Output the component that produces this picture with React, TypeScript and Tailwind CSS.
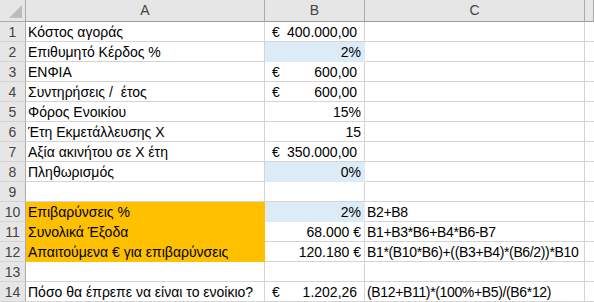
import React from "react";

type Cell = {
  a?: string;
  b?: string;
  euro?: boolean;
  c?: string;
  blue?: boolean;
  orange?: boolean;
};

const rows: Cell[] = [
  { a: "Κόστος αγοράς", euro: true, b: "400.000,00 " },
  { a: "Επιθυμητό Κέρδος %", b: "2%", blue: true },
  { a: "ΕΝΦΙΑ", euro: true, b: "600,00 " },
  { a: "Συντηρήσεις /  έτος", euro: true, b: "600,00 " },
  { a: "Φόρος Ενοικίου", b: "15%" },
  { a: "Έτη Εκμετάλλευσης Χ", b: "15" },
  { a: "Αξία ακινήτου σε Χ έτη", euro: true, b: "350.000,00 " },
  { a: "Πληθωρισμός", b: "0%", blue: true },
  {},
  { a: "Επιβαρύνσεις %", b: "2%", blue: true, orange: true, c: "B2+B8" },
  { a: "Συνολικά Έξοδα", b: "68.000 €", orange: true, c: "B1+B3*B6+B4*B6-B7" },
  {
    a: "Απαιτούμενα € για επιβαρύνσεις",
    b: "120.180 €",
    orange: true,
    c: "B1*(B10*B6)+((B3+B4)*(B6/2))*B10",
  },
  {},
  { a: "Πόσο θα έπρεπε να είναι το ενοίκιο?", euro: true, b: "1.202,26 ", c: "(B12+B11)*(100%+B5)/(B6*12)" },
];

const App = () => {
  return (
    <div
      className="w-[594px] h-[302px] overflow-hidden bg-white text-[14px] text-black"
      style={{ fontFamily: '"Liberation Sans", Arial, sans-serif' }}
    >
      <div className="grid grid-cols-[26px_239px_100px_220px_1fr] grid-rows-[22px_repeat(14,20px)]">
        {/* header row */}
        <div className="relative bg-[#e6e6e6] border-r border-b border-[#ababab]">
          <div className="absolute right-[3px] bottom-[3px] w-0 h-0 border-l-[13px] border-l-transparent border-b-[13px] border-b-[#bcbcbc]" />
        </div>
        {["A", "B", "C", ""].map((h, i) => (
          <div
            key={i}
            className="bg-[#e6e6e6] border-r border-b border-r-[#ababab] border-b-[#9b9b9b] flex items-center justify-center text-[#444]"
          >
            {h}
          </div>
        ))}

        {rows.map((r, i) => (
          <React.Fragment key={i}>
            <div className="bg-[#e6e6e6] border-r border-b border-r-[#ababab] border-b-[#d4d4d4] flex items-center justify-center text-[#444] pt-[1px]">
              {i + 1}
            </div>
            <div
              className={
                r.orange
                  ? "bg-[#ffc000] border-r border-b border-[#ffc000] flex items-center pl-[2px] pt-[1px] whitespace-pre overflow-visible"
                  : "border-r border-b border-[#d4d4d4] flex items-center pl-[2px] pt-[1px] whitespace-pre overflow-visible"
              }
            >
              {r.a}
            </div>
            <div
              className={
                r.blue
                  ? "bg-[#ddebf7] border-r border-b border-[#ddebf7] flex items-center justify-between pl-[7px] pr-[3px] pt-[1px] whitespace-pre"
                  : "border-r border-b border-[#d4d4d4] flex items-center justify-between pl-[7px] pr-[3px] pt-[1px] whitespace-pre"
              }
            >
              <span>{r.euro ? "€" : ""}</span>
              <span>{r.b}</span>
            </div>
            <div className="border-r border-b border-[#d4d4d4] flex items-center pl-[2px] pt-[1px] whitespace-pre overflow-visible tracking-[-0.35px]">
              {r.c}
            </div>
            <div className="border-b border-[#d4d4d4]" />
          </React.Fragment>
        ))}
      </div>
    </div>
  );
};

export default App;
